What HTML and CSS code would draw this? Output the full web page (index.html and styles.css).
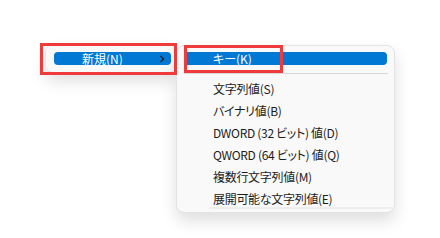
FILE: index.html
```html
<!DOCTYPE html>
<html lang="ja">
<head>
<meta charset="utf-8">
<link rel="stylesheet" href="styles.css">
</head>
<body>
<div class="stage">
  <div class="parent-menu">
    <div class="pill">
      <span class="pill-label">新規(N)</span>
      <svg class="chev" width="6" height="8" viewBox="0 0 6 8"><path d="M1.5 1 L4.5 4 L1.5 7" fill="none" stroke="#1b1b1b" stroke-width="1.2"/></svg>
    </div>
  </div>
  <div class="sub-menu">
    <div class="sel-item">キー(K)</div>
    <div class="sep"></div>
    <div class="item">文字列値(S)</div>
    <div class="item">バイナリ値(B)</div>
    <div class="item">DWORD (32 ビット) 値(D)</div>
    <div class="item">QWORD (64 ビット) 値(Q)</div>
    <div class="item">複数行文字列値(M)</div>
    <div class="item">展開可能な文字列値(E)</div>
    <div class="fade-line"></div>
  </div>
  <div class="mark mark-a"></div>
  <div class="mark mark-b"></div>
</div>
</body>
</html>
```
FILE: styles.css
```css
html, body {
  margin: 0;
  padding: 0;
  background: #ffffff;
}
body {
  width: 440px;
  height: 238px;
  overflow: hidden;
  font-family: "Noto Sans CJK JP", "Noto Sans", sans-serif;
  font-size: 12px;
  color: #1c1c1c;
  font-feature-settings: "palt";
}
.stage {
  position: relative;
  display: flex;
  align-items: flex-start;
  padding: 44px 0 0 45px;
}
.parent-menu {
  width: 132px;
  height: 29px;
  box-sizing: border-box;
  background: #f9f9f9;
  border: 1px solid #e6e6e6;
  border-radius: 8px;
  box-shadow: 0 8px 16px rgba(0, 0, 0, 0.13);
  padding: 7px 5px 0 8px;
}
.pill {
  height: 13px;
  background: #0078d4;
  border-radius: 4px;
  display: flex;
  align-items: center;
  color: #ffffff;
  line-height: 13px;
  padding: 0 6px 0 28px;
}
.pill-label {
  flex: 1;
}
.chev {
  display: block;
}
.sub-menu {
  position: relative;
  margin: 1px 0 0 -1px;
  width: 219px;
  height: 168px;
  box-sizing: border-box;
  background: #f9f9f9;
  border: 1px solid #e3e3e3;
  border-radius: 8px;
  box-shadow: 0 8px 16px rgba(0, 0, 0, 0.13);
  padding: 6px 7px 0 7px;
}
.sel-item {
  height: 13px;
  line-height: 13px;
  background: #0078d4;
  border-radius: 4px;
  color: #ffffff;
  padding-left: 29px;
}
.sep {
  height: 1px;
  background: #d8d8d8;
  margin: 8px -1px 4px 0;
}
.item {
  height: 22px;
  line-height: 22px;
  padding-left: 29px;
  white-space: nowrap;
  letter-spacing: -0.3px;
}
.fade-line {
  position: absolute;
  left: 32px;
  right: 0;
  bottom: 3px;
  height: 2px;
  background: #eeeeee;
}
.mark {
  position: absolute;
  border: 3px solid #ef3b3b;
  box-sizing: border-box;
}
.mark-a {
  left: 40px;
  top: 43px;
  width: 137px;
  height: 32px;
}
.mark-b {
  left: 184px;
  top: 45px;
  width: 99px;
  height: 28px;
}
```
